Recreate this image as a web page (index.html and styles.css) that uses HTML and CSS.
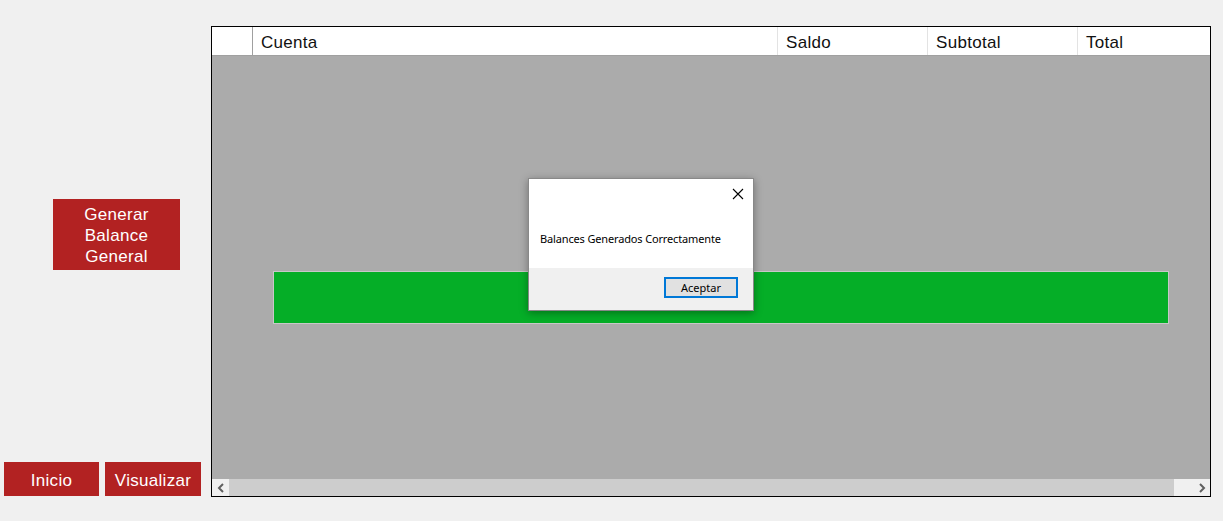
FILE: index.html
```html
<!DOCTYPE html>
<html lang="es">
<head>
<meta charset="utf-8">
<title>Balance General</title>
<link rel="stylesheet" href="styles.css">
</head>
<body>
<div class="app">
  <aside class="side">
    <button class="btn btn-gen">Generar<br>Balance<br>General</button>
    <div class="side-bottom">
      <button class="btn btn-inicio">Inicio</button>
      <button class="btn btn-vis">Visualizar</button>
    </div>
  </aside>
  <section class="grid">
    <div class="grid-head">
      <div class="col col-row"></div>
      <div class="col col-cuenta">Cuenta</div>
      <div class="col col-num">Saldo</div>
      <div class="col col-num">Subtotal</div>
      <div class="col col-total">Total</div>
    </div>
    <div class="grid-body">
      <div class="progress"></div>
    </div>
    <div class="hscroll">
      <div class="arrow">
        <svg width="8" height="10" viewBox="0 0 8 10"><path d="M6 1 L2 5 L6 9" fill="none" stroke="#606060" stroke-width="2"/></svg>
      </div>
      <div class="thumb"></div>
      <div class="track"></div>
      <div class="arrow">
        <svg width="8" height="10" viewBox="0 0 8 10"><path d="M2 1 L6 5 L2 9" fill="none" stroke="#606060" stroke-width="2"/></svg>
      </div>
    </div>
  </section>
</div>
<div class="dialog">
  <div class="dialog-top">
    <div class="dialog-title">
      <svg class="close" width="12" height="12" viewBox="0 0 12 12"><path d="M1 1 L11 11 M11 1 L1 11" stroke="#000" stroke-width="1.1"/></svg>
    </div>
    <div class="dialog-msg">Balances Generados Correctamente</div>
  </div>
  <div class="dialog-foot">
    <button class="dlg-btn">Aceptar</button>
  </div>
</div>
</body>
</html>
```

FILE: styles.css
```css
* { box-sizing: border-box; }
html, body { margin: 0; padding: 0; }
body {
  width: 1223px;
  height: 521px;
  background: #f0f0f0;
  font-family: "Liberation Sans", Arial, sans-serif;
  overflow: hidden;
  position: relative;
}
.app {
  display: flex;
  padding-top: 26px;
  height: 521px;
}
.side {
  width: 211px;
  height: 471px;
  display: flex;
  flex-direction: column;
}
.btn {
  background: #b22222;
  color: #fff;
  border: 0;
  font-family: "Liberation Sans", Arial, sans-serif;
  font-size: 17px;
  letter-spacing: 0.3px;
  padding: 0;
  cursor: pointer;
}
.btn-gen {
  margin-top: 173px;
  margin-left: 53px;
  width: 127px;
  height: 71px;
  line-height: 21px;
  padding-top: 2px;
}
.side-bottom {
  margin-top: auto;
  margin-bottom: 1px;
  display: flex;
  gap: 6px;
  padding-left: 4px;
}
.btn-inicio { width: 95px; height: 34px; padding-top: 3px; }
.btn-vis { width: 96px; height: 34px; padding-top: 3px; }

.grid {
  width: 1000px;
  height: 471px;
  border: 1px solid #000;
  display: flex;
  flex-direction: column;
  background: #ababab;
}
.grid-head {
  display: flex;
  height: 29px;
  background: #fff;
  border-bottom: 1px solid #a0a0a0;
}
.col {
  font-size: 17px;
  letter-spacing: 0.3px;
  color: #111;
  padding-left: 8px;
  padding-top: 2px;
  line-height: 27px;
  border-right: 1px solid #e3e3e3;
}
.col-row { width: 41px; border-right: 1px solid #a0a0a0; padding: 0; }
.col-cuenta { width: 525px; }
.col-num { width: 150px; }
.col-total { flex: 1; border-right: 0; }

.grid-body {
  flex: 1;
  padding-top: 215px;
  padding-left: 61px;
}
.progress {
  width: 896px;
  height: 53px;
  background: #05ae27;
  border: 1px solid #c8c8c8;
}
.hscroll {
  height: 17px;
  display: flex;
  background: #f0f0f0;
}
.arrow {
  width: 17px;
  display: flex;
  align-items: center;
  justify-content: center;
}
.thumb {
  width: 945px;
  background: #cdcdcd;
}
.track { flex: 1; }

.dialog {
  position: absolute;
  left: 528px;
  top: 178px;
  width: 226px;
  height: 133px;
  border: 1px solid #888;
  background: #fff;
  box-shadow: 0 2px 8px rgba(0,0,0,0.35);
  display: flex;
  flex-direction: column;
  font-family: "Noto Sans", "Open Sans", sans-serif;
}
.dialog-top { flex: 1; }
.dialog-title {
  height: 30px;
  display: flex;
  justify-content: flex-end;
  align-items: center;
  padding-right: 9px;
}
.dialog-msg {
  padding-left: 11px;
  padding-top: 22px;
  font-size: 11px;
  letter-spacing: -0.15px;
  color: #000;
}
.dialog-foot {
  height: 42px;
  background: #f0f0f0;
  display: flex;
  justify-content: flex-end;
  align-items: flex-start;
  padding: 9px 15px 0 0;
}
.dlg-btn {
  width: 74px;
  height: 21px;
  background: #e1e1e1;
  border: 2px solid #0078d7;
  font-family: "Noto Sans", "Open Sans", sans-serif;
  font-size: 11px;
  color: #000;
  padding: 0;
}
```
